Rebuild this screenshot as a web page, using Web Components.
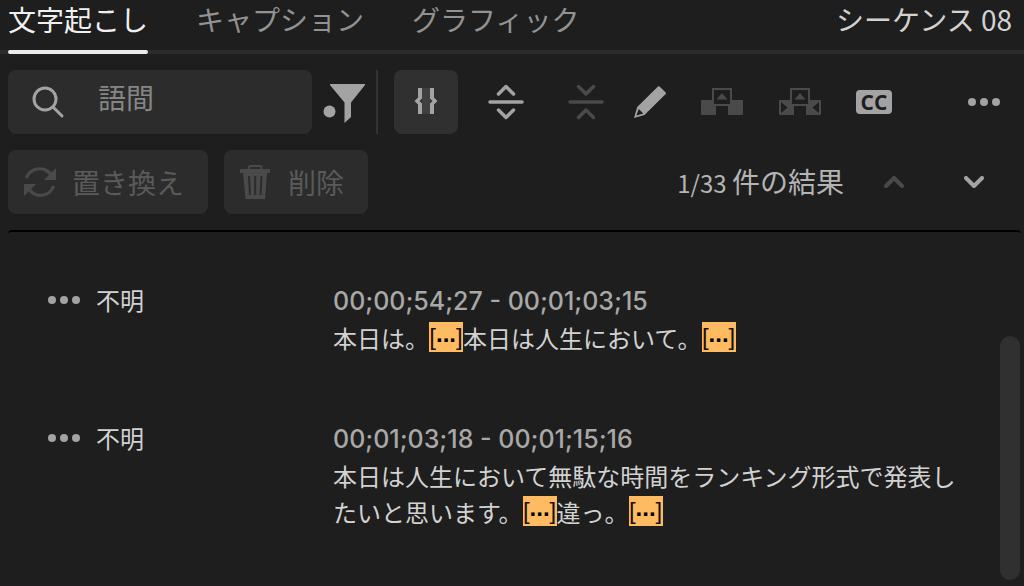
<!DOCTYPE html>
<html lang="ja">
<head>
<meta charset="utf-8">
<title>文字起こし</title>
<style>
  body{
    margin:0; min-height:100vh; background:#1e1e1e; color:#d2d2d2;
    font-family:"Noto Sans CJK JP",sans-serif; font-size:28px; line-height:40px;
    --icon:#a3a3a3; --icon-off:#4a4a4a; --field:#2c2c2c; --page:#1e1e1e;
  }
</style>
</head>
<body>
<transcript-panel></transcript-panel>

<script>
(function () {
  const dots = '<svg width="32" height="10" viewBox="0 0 32 10" fill="currentColor"><circle cx="4" cy="5" r="4"/><circle cx="16" cy="5" r="4"/><circle cx="28" cy="5" r="4"/></svg>';

  const clips = (cuts) => `
    <svg width="44" height="32" viewBox="0 0 44 32" fill="currentColor">
      <path d="M2 14H12V19.500H16V29H2Q1 29 1 28V15Q1 14 2 14zM42 14H32V19.500H28V29H42Q43 29 43 28V15Q43 14 42 14z"/>
      <path d="M13 3H31V19H13z" fill="none" stroke="currentColor" stroke-width="2"/>
      <path d="M16.500 13.500L22 7L27.500 13.500z"/>
      ${cuts ? '<path d="M3 16V27L9.500 21.500zM41 16V27L34.500 21.500z" fill="#1e1e1e"/>' : ''}
    </svg>`;

  const ICONS = {
    search: '<svg width="32" height="32" viewBox="0 0 32 32" fill="none" stroke="currentColor" stroke-width="3" stroke-linecap="round"><circle cx="13" cy="13" r="11"/><path d="M21 21L30 30"/></svg>',
    filter: '<svg width="44" height="44" viewBox="0 0 44 44" fill="currentColor"><path d="M8.500 4H42.500Q43.500 4 43 5L29 22.500V37L22.500 43V22.500L8 5Q7.500 4 8.500 4z"/><circle cx="7.500" cy="31.500" r="6"/></svg>',
    pauses: '<svg width="32" height="32" viewBox="0 0 32 32"><path d="M12 2h8v26h-8z" fill="#404040"/><path d="M12 2H8V11.500L4.500 15L8 18.500V28H12V17.500L9.500 15L12 12.500zM20 2H24V11.500L27.500 15L24 18.500V28H20V17.500L22.500 15L20 12.500z" fill="currentColor"/></svg>',
    expand: '<svg width="36" height="36" viewBox="0 0 36 36" fill="none" stroke="currentColor" stroke-width="3.500" stroke-linecap="round" stroke-linejoin="round"><path d="M2 18H34M10.500 10L18 2.500L25.500 10M10.500 26L18 33.500L25.500 26"/></svg>',
    collapse: '<svg width="36" height="36" viewBox="0 0 36 36" fill="none" stroke="currentColor" stroke-width="3.500" stroke-linecap="round" stroke-linejoin="round"><path d="M2 18H34M10.500 2.500L18 10L25.500 2.500M10.500 33.500L18 26L25.500 33.500"/></svg>',
    edit: '<svg width="32" height="32" viewBox="0 0 32 32"><path fill="currentColor" fill-rule="evenodd" d="M24 .5Q24.700 0 25.500 .5L31.700 6.500Q32.300 7.200 31.700 8L10.500 29L0 32L3.200 21zM4.800 23L2.400 29.600L9.300 27.600z"/></svg>',
    insert: clips(false),
    overwrite: clips(true),
    more: dots,
    up: '<svg width="20" height="12" viewBox="0 0 20 12" fill="none" stroke="currentColor" stroke-width="4" stroke-linecap="round" stroke-linejoin="round"><path d="M2 10L10 2L18 10"/></svg>',
    down: '<svg width="20" height="12" viewBox="0 0 20 12" fill="none" stroke="currentColor" stroke-width="4" stroke-linecap="round" stroke-linejoin="round"><path d="M2 2L10 10L18 2"/></svg>',
    replace: '<svg width="32" height="32" viewBox="0 0 32 32" fill="currentColor"><path d="M.8 11.500A15.800 15.800 0 0 1 27.500 6.500L32 2V14H20L25 9A12 12 0 0 0 4 12.500zM31.200 20.500A15.800 15.800 0 0 1 4.500 25.500L0 30V18H12L7 23A12 12 0 0 0 28 19.500z"/></svg>',
    trash: '<svg width="32" height="34" viewBox="0 0 32 34"><path d="M9 4V2.500Q9 1 10.500 1H20Q21.500 1 21.500 2.500V4" fill="none" stroke="currentColor" stroke-width="2"/><path d="M0 4H30V8H27L25 34H5.500L3 8H0z" fill="currentColor"/><path d="M9 11L10 30M15.200 11V30M21.500 11L20.500 30" stroke="#2c2c2c" stroke-width="2" fill="none"/></svg>',
  };

  function define(name, html) {
    customElements.define(name, class extends HTMLElement {
      connectedCallback() {
        if (this.shadowRoot) return;
        const root = this.attachShadow({ mode: 'open' });
        root.innerHTML = typeof html === 'function' ? html(this) : html;
      }
    });
  }

  // <tool-button icon="edit" label="..." wide small active disabled>
  define('tool-button', (el) => `
    <style>
      :host{ display:block; }
      button{
        display:flex; align-items:center; justify-content:center; height:64px;
        padding:0; border:0; border-radius:8px; background:none; color:var(--icon);
      }
      :host([wide]) button{ width:64px; }
      :host([small]) button{ height:36px; }
      :host([active]) button{ background:#303030; }
      button:disabled{ color:var(--icon-off); }
      svg{ display:block; }
    </style>
    <button aria-label="${el.getAttribute('label')}"${el.hasAttribute('disabled') ? ' disabled' : ''}>${ICONS[el.getAttribute('icon')] || ''}<slot></slot></button>`);

  // Filled button: icon plus a slotted caption.
  define('action-button', (el) => `
    <style>
      :host{ display:block; }
      button{
        display:flex; align-items:center; gap:16px; height:64px; padding:0 24px 0 16px;
        border:0; border-radius:8px; background:var(--field); color:#5a5a5a; font:inherit; white-space:nowrap;
      }
      svg{ display:block; color:var(--icon-off); }
    </style>
    <button disabled>${ICONS[el.getAttribute('icon')]}<span><slot></slot></span></button>`);

  define('panel-tabs', `
    <style>
      :host{
        display:flex; justify-content:space-between; box-shadow:inset 0 -4px #2c2c2c;
        padding:0 12px 0 8px; line-height:38px;
      }
      nav{ display:flex; gap:48px; }
      button{
        padding:0 0 12px; border:0; background:none; color:#929292; font:inherit; white-space:nowrap;
        border-bottom:4px solid transparent;
      }
      button[aria-selected=true]{ color:#f0f0f0; position:relative; }
      button[aria-selected=true]::after{
        content:""; position:absolute; left:0; right:0; bottom:-4px; height:4px; border-radius:2px; background:#ebebeb;
      }
    </style>
    <nav role="tablist">
      <button role="tab" aria-selected="true">文字起こし</button>
      <button role="tab" aria-selected="false">キャプション</button>
      <button role="tab" aria-selected="false">グラフィック</button>
    </nav>
    <span><slot></slot></span>`);

  define('search-field', `
    <style>
      :host{ display:block; flex:0 1 304px; min-width:0; }
      label{
        display:flex; align-items:center; gap:34px; height:64px; padding:0 24px;
        box-sizing:border-box; border-radius:8px; background:var(--field); color:var(--icon);
      }
      svg{ flex:none; }
      input{
        flex:1; min-width:0; height:40px; margin:0 0 10px; padding:0; border:0; outline:0;
        background:none; color:#d2d2d2; font:inherit;
      }
      input::placeholder{ color:#868686; opacity:1; }
    </style>
    <label>${ICONS.search}<input type="text" aria-label="検索" placeholder="語間"></label>`);

  define('panel-toolbar', `
    <style>
      :host{ display:flex; align-items:center; padding:0 24px 0 8px; }
      .rule{ width:2px; height:64px; margin:0 16px 0 10px; background:#333; }
      .modes{ display:flex; gap:16px; }
      .edits{ display:flex; gap:34px; margin:0 auto 0 16px; }
      .filter{ margin-left:10px; }
      .cc{
        display:block; width:36px; height:24px; border-radius:4px; background:var(--icon); color:var(--page);
        font:700 21px/24px "Open Sans",sans-serif; text-align:center;
      }
    </style>
    <search-field></search-field>
    <tool-button class="filter" icon="filter" label="フィルター"></tool-button>
    <span class="rule"></span>
    <div class="modes">
      <tool-button wide active icon="pauses" label="語間を表示"></tool-button>
      <tool-button wide icon="expand" label="セグメントを分割"></tool-button>
      <tool-button wide disabled icon="collapse" label="セグメントを結合"></tool-button>
    </div>
    <div class="edits">
      <tool-button icon="edit" label="編集"></tool-button>
      <tool-button disabled icon="insert" label="挿入"></tool-button>
      <tool-button disabled icon="overwrite" label="上書き"></tool-button>
      <tool-button label="キャプションの作成"><span class="cc">CC</span></tool-button>
    </div>
    <tool-button icon="more" label="その他"></tool-button>`);

  define('result-bar', `
    <style>
      :host{ display:flex; align-items:center; gap:16px; padding:0 40px 0 8px; }
      .count{ margin-left:auto; color:#b4b4b4; white-space:nowrap; }
      .num{ font-size:24px; }
      .steps{ display:flex; gap:60px; margin-left:24px; }
    </style>
    <action-button icon="replace">置き換え</action-button>
    <action-button icon="trash">削除</action-button>
    <span class="count"><span class="num">1/33 </span>件の結果</span>
    <div class="steps">
      <tool-button disabled icon="up" label="前へ"></tool-button>
      <tool-button icon="down" label="次へ"></tool-button>
    </div>`);

  // vertical-align:top keeps the mark from stretching its line
  define('pause-mark', `
    <style>
      :host{ display:inline-block; vertical-align:top; margin-top:2px; }
      mark{
        display:block; width:34px; height:30px; background:#ffbb62; color:#1a1000;
        font:24px/30px "Liberation Sans",sans-serif; text-align:center; white-space:nowrap;
      }
      b{ vertical-align:3px; line-height:1px; color:#000; }
    </style>
    <mark>[<b>...</b>]</mark>`);

  define('transcript-segment', (el) => `
    <style>
      :host{ display:grid; grid-template-columns:285px 1fr; font-size:24px; line-height:36px; }
      .speaker{ display:flex; align-items:center; gap:16px; height:36px; }
      time{ display:block; color:#a8a8a8; font:500 25px/38px Inter,sans-serif; }
      p{ margin:0; }
    </style>
    <div class="speaker"><tool-button small icon="more" label="話者メニュー"></tool-button>${el.getAttribute('speaker')}</div>
    <div><time>${el.getAttribute('time')}</time><p><slot></slot></p></div>`);

  define('transcript-list', `
    <style>
      :host{
        display:flex; flex:1; margin:0 3px 0 8px; border-top:2px solid #000;
        border-radius:4px 4px 0 0;
      }
      .items{ flex:1; display:flex; flex-direction:column; gap:64px; padding:50px 32px 0 40px; }
      .track{ display:flex; flex-direction:column; justify-content:flex-end; width:20px; padding:0 1px 6px 0; }
      .thumb{ flex:0 0 70%; border-radius:10px; background:#303030; }
    </style>
    <div class="items"><slot></slot></div>
    <div class="track"><div class="thumb"></div></div>`);

  define('transcript-panel', `
    <style>
      :host{ display:flex; flex-direction:column; gap:16px; min-height:100vh; }
    </style>
    <panel-tabs>シーケンス 08</panel-tabs>
    <panel-toolbar></panel-toolbar>
    <result-bar></result-bar>
    <transcript-list>
      <transcript-segment speaker="不明" time="00;00;54;27 - 00;01;03;15">本日は。<pause-mark></pause-mark>本日は人生において。<pause-mark></pause-mark></transcript-segment>
      <transcript-segment speaker="不明" time="00;01;03;18 - 00;01;15;16">本日は人生において無駄な時間をランキング形式で発表したいと思います。<pause-mark></pause-mark>違っ。<pause-mark></pause-mark></transcript-segment>
    </transcript-list>`);
})();
</script>
</body>
</html>
